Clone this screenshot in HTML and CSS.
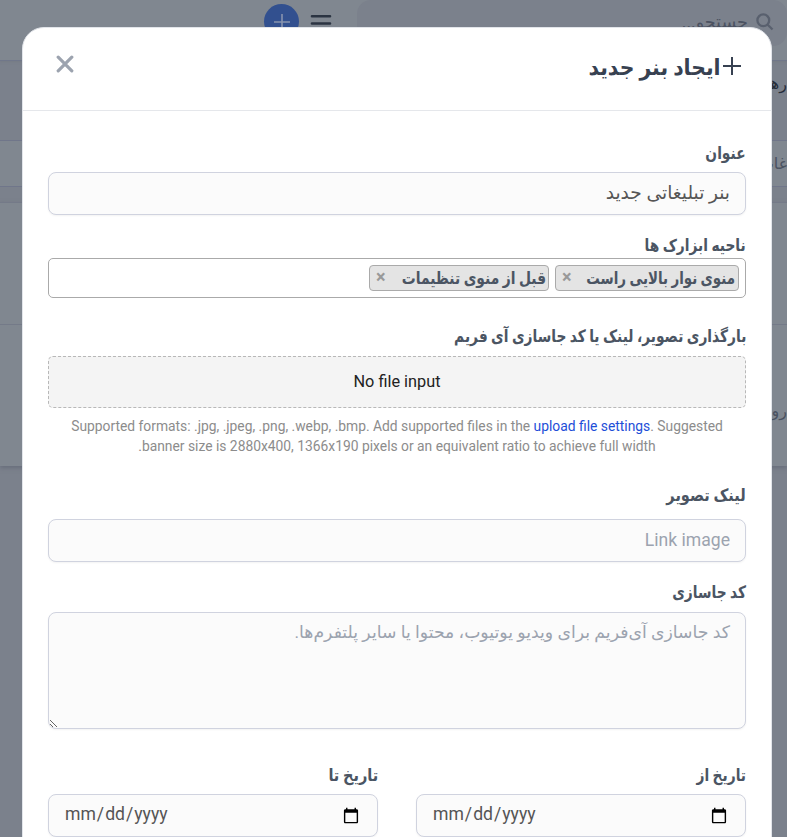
FILE: index.html
```html
<!DOCTYPE html>
<html lang="fa" dir="rtl">
<head>
<meta charset="utf-8">
<title>ایجاد بنر جدید</title>
<link rel="stylesheet" href="styles.css">
</head>
<body>
<div class="page">
  <header class="topbar">
    <div class="search">
      <svg class="search-icon" viewBox="0 0 18 18"><circle cx="7.3" cy="7.3" r="5.9"/><path d="M11.7 11.7 16.5 16.5"/></svg>
      <span class="search-text">جستجو...</span>
    </div>
    <svg class="menu-icon" viewBox="0 0 22 18"><path d="M2 2.3H20M2 9.5H20M2 16.7H20"/></svg>
    <div class="add-btn"><svg viewBox="0 0 18 18"><path d="M9 1V17M1 9H17"/></svg></div>
  </header>
  <div class="crumbs"><span>رها</span></div>
  <nav class="tabs"><span>غات</span></nav>
  <div class="spacer"></div>
  <section class="panel"><div class="panel-head"></div><div class="panel-body"><span>روه</span></div></section>
</div>
<div class="overlay">
  <main class="modal">
    <div class="modal-head">
      <h1 class="title"><svg viewBox="0 0 20 20"><path d="M10 1V19M1 10H19"/></svg><span class="title-text">ایجاد بنر جدید</span></h1>
      <svg class="close" viewBox="0 0 18 18"><path d="M2.2 2.2 15.8 15.8M15.8 2.2 2.2 15.8"/></svg>
    </div>
    <form class="form">
      <label class="label"><span>عنوان</span></label>
      <input class="input f-title" type="text" value="بنر تبلیغاتی جدید">
      <label class="label"><span>ناحیه ابزارک ها</span></label>
      <div class="select">
        <div class="tag"><span class="tag-text">منوی نوار بالایی راست</span><span class="x">×</span></div>
        <div class="tag"><span class="tag-text">قبل از منوی تنظیمات</span><span class="x">×</span></div>
      </div>
      <label class="label"><span>بارگذاری تصویر، لینک یا کد جاسازی آی فریم</span></label>
      <div class="drop" dir="ltr">No file input</div>
      <p class="help">Supported formats: .jpg, .jpeg, .png, .webp, .bmp. Add supported files in the <a>upload file settings</a>. Suggested<br>banner size is 2880x400, 1366x190 pixels or an equivalent ratio to achieve full width.</p>
      <label class="label"><span class="wide">لینک تصویر</span></label>
      <input class="input f-link" type="text" placeholder="Link image">
      <label class="label"><span>کد جاسازی</span></label>
      <textarea class="input area" placeholder="کد جاسازی آی‌فریم برای ویدیو یوتیوب، محتوا یا سایر پلتفرم‌ها."></textarea>
      <div class="dates">
        <div><label class="label"><span>تاریخ از</span></label><input class="input date" type="date" dir="ltr" lang="en-US"></div>
        <div><label class="label"><span class="wide">تاریخ تا</span></label><input class="input date" type="date" dir="ltr" lang="en-US"></div>
      </div>
    </form>
  </main>
</div>
</body>
</html>
```
FILE: styles.css
```css
* { box-sizing: border-box; }
html, body { height: 100%; margin: 0; overflow: hidden; }
body { font-family: Roboto, "DejaVu Sans", sans-serif; color: #4b5563; font-size: 16px; background: #7b818c; }
svg { fill: none; stroke: currentColor; display: block; flex: none; }
.page { height: 837px; }
.topbar { height: 61px; background: #808790; border-bottom: 1px solid #70778a; box-shadow: 0 1px 2px #70768080; display: flex; align-items: flex-start; }
.search { width: 430px; height: 46px; background: #7b818c; border-radius: 14px; display: flex; padding: 12px 13px 0 0; color: #59606e; }
.search-icon { width: 18px; height: 18px; margin-top: 1px; stroke-width: 2.3; }
.search-text { font-size: 17.6px; line-height: 22px; margin: -1px 8px 0 0; color: #4b5261; }
.menu-icon { width: 22px; height: 18px; margin: 14px 25px 0 11px; stroke-width: 2.6; stroke-linecap: round; color: #2b3442; }
.add-btn { width: 35px; height: 35px; margin-top: 4px; border-radius: 50%; background: #32508f; color: #8793ae; display: grid; place-items: center; }
.add-btn svg { width: 18px; height: 18px; stroke-width: 1.6; }
.crumbs { height: 79px; padding: 13px 0 0; line-height: 20px; color: #262d3a; }
.crumbs span, .tabs span, .panel-body span { display: block; width: max-content; font-size: 16px; }
.tabs { height: 47px; border: solid #70768a; border-width: 1px 0; background: #808790; padding-top: 13px; line-height: 20px; color: #4a5261; }
.spacer { height: 15px; }
.panel { height: 264px; background: #808790; border-top: 1px solid #747a88; box-shadow: 0 2px 4px #686e7b; }
.panel-head { height: 122px; border-bottom: 1px solid #747a88; }
.panel-body { padding-top: 76px; line-height: 20px; color: #4a5261; }
.overlay { position: absolute; inset: 0; padding: 27px 15px 0 22px; overflow: hidden; }
.modal { height: 860px; background: #fff; border: 1px solid #e2e5ea; border-radius: 22px; }
.modal-head { height: 83px; border-bottom: 1px solid #e5e7eb; display: flex; justify-content: space-between; padding: 0 29px 0 33px; }
.title { display: flex; margin: 0; font-size: 22px; line-height: 34px; padding-top: 23px; color: #374151; }
.title svg { width: 20px; height: 20px; stroke-width: 2; margin-top: 5px; }
.title-text { margin-right: 1px; transform: scaleX(.927); transform-origin: right; }
.close { width: 18px; height: 18px; margin-top: 27px; color: #9ca3af; stroke-width: 3.2; stroke-linecap: round; }
.form { padding: 29px 25px 0; }
.label { display: block; height: 24px; line-height: 26px; font-weight: 700; font-size: 17px; white-space: nowrap; }
.label span { display: inline-block; transform: scaleX(.811); transform-origin: right; }
.label .wide { transform: scaleX(.856); }
.input { display: block; width: 100%; height: 43px; margin: 8px 0 17px; padding: 0 15px; border: 1px solid #d0d3df; border-radius: 8px; background: #fbfbfb; box-shadow: 0 1px 2px #0000000d; font: 17.6px Roboto, "DejaVu Sans", sans-serif; color: #555; outline: 0; }
.input::placeholder { color: #9ca3af; opacity: 1; }
.f-title { font-size: 18.6px; padding-bottom: 1px; }
.select { height: 40px; margin: 2px 0 25px; border: 1px solid #aaa; border-radius: 5px; padding: 6px 6px; display: flex; gap: 6px; }
.tag { height: 26px; background: #e4e4e4; border: 1px solid #aaa; border-radius: 4px; display: flex; justify-content: space-between; padding: 0 3px 0 6px; font-size: 17px; font-weight: 700; line-height: 24px; white-space: nowrap; }
.tag:nth-child(1) { width: 184px; }
.tag:nth-child(2) { width: 180px; padding-right: 2px; }
.tag-text { width: 150px; transform: scaleX(.789); transform-origin: right; }
.tag:nth-child(2) .tag-text { transform: scaleX(.815); }
.x { color: #999; font-size: 18px; line-height: 22px; }
.drop { height: 52px; margin: 9px 0 8px; border: 1px dashed #b8b8b8; border-radius: 5px; background: #f4f4f4; color: #222; text-align: center; line-height: 50px; font-size: 16.3px; }
.help { margin: 0 0 26px; font-size: 13.84px; line-height: 20px; color: #8c8c8c; text-align: center; white-space: nowrap; }
.help a { color: #1d4ed8; }
.f-link { margin-top: 13px; padding-bottom: 2px; }
.area { height: 117px; margin: 9px 0 33px; padding: 8px 15px; font-size: 17.25px; line-height: 22px; resize: both; }
.dates { display: grid; grid-template-columns: 330px 330px; gap: 38px; }
.date { padding: 0 15px; }
.date::-webkit-datetime-edit { padding-bottom: 4px; }
```
